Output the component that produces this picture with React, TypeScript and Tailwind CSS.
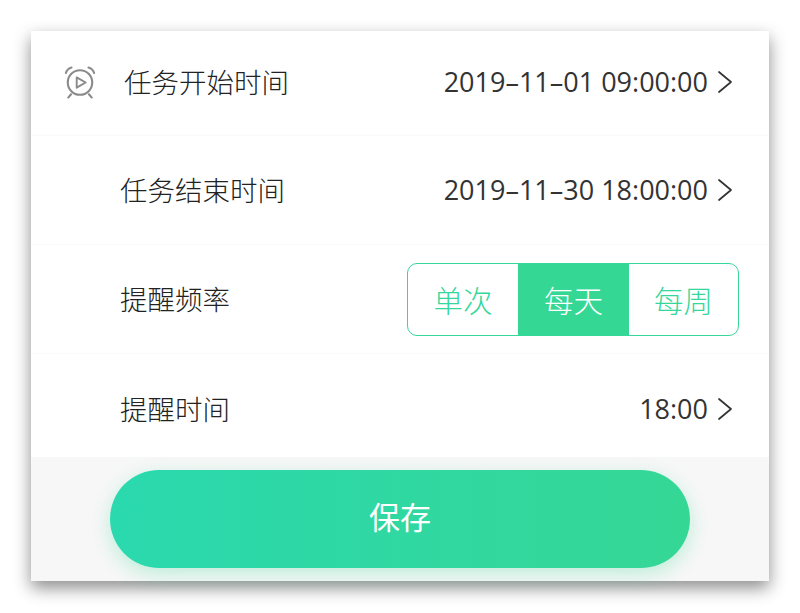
const font = { fontFamily: '"Noto Sans CJK SC", sans-serif' };

function Chevron() {
  return (
    <svg width="16" height="24" viewBox="0 0 16 24" fill="none" className="ml-[9px] shrink-0">
      <path d="M2 2 L14 12 L2 22" stroke="#333" strokeWidth="1.7" strokeLinecap="round" strokeLinejoin="round" />
    </svg>
  );
}

function AlarmIcon() {
  return (
    <svg width="32" height="35" viewBox="0 0 34 36" fill="none" stroke="#8a8a8a" strokeWidth="2.2" strokeLinecap="round" strokeLinejoin="round">
      <circle cx="17" cy="18" r="13" />
      <path d="M13.5 12.5 L23 18 L13.5 23.5 Z" strokeWidth="2" />
      <path d="M2 8 Q3 3.5 8 2" />
      <path d="M32 8 Q31 3.5 26 2" />
      <path d="M7.5 30.5 L4.5 34" />
      <path d="M26.5 30.5 L29.5 34" />
    </svg>
  );
}

function Value({ text }: { text: string }) {
  return (
    <div className="flex items-center text-[27px] font-normal text-[#333]" style={{ fontFamily: '"Open Sans", "Noto Sans CJK SC", sans-serif' }}>
      <span>{text.replace(/-/g, "–")}</span>
      <Chevron />
    </div>
  );
}

export default function App() {
  return (
    <div className="w-[800px] h-[613px] bg-white pt-[31px] pl-[31px] overflow-hidden" style={font}>
      <div className="w-[738px] h-[550px] bg-white flex flex-col shadow-[0_7px_16px_rgba(0,0,0,0.45)]">
        <div className="flex items-center justify-between h-[105px] border-b border-[#fafafa] pl-[33px] pr-[36px] pb-[2px]">
          <div className="flex items-center">
            <AlarmIcon />
            <span className="ml-[28px] text-[27.5px] font-light text-[#222]">任务开始时间</span>
          </div>
          <Value text="2019-11-01 09:00:00" />
        </div>
        <div className="flex items-center justify-between h-[109px] border-b border-[#fafafa] pl-[89px] pr-[36px]">
          <span className="text-[27.5px] font-light text-[#222]">任务结束时间</span>
          <Value text="2019-11-30 18:00:00" />
        </div>
        <div className="flex items-center justify-between h-[109px] border-b border-[#fafafa] pl-[89px] pr-[30px]">
          <span className="text-[27.5px] font-light text-[#222]">提醒频率</span>
          <div className="flex h-[73px] w-[332px] rounded-[10px] border border-[#35d79a] overflow-hidden text-[29.5px] font-light text-[#35d79a]">
            <div className="w-[110px] flex items-center justify-center">单次</div>
            <div className="w-[111px] flex items-center justify-center bg-[#35d795] text-white">每天</div>
            <div className="flex-1 flex items-center justify-center">每周</div>
          </div>
        </div>
        <div className="flex items-center justify-between h-[103px] pl-[89px] pr-[36px] pt-[7px]">
          <span className="text-[27.5px] font-light text-[#222]">提醒时间</span>
          <Value text="18:00" />
        </div>
        <div className="flex-1 bg-[#f7f7f7] flex justify-center pt-[13px]">
          <button className="w-[580px] h-[98px] rounded-full bg-gradient-to-r from-[#2ad9ae] to-[#35d795] text-white text-[31px] font-normal pb-[6px] shadow-[0_6px_20px_rgba(53,215,149,0.3)]">
            保存
          </button>
        </div>
      </div>
    </div>
  );
}
